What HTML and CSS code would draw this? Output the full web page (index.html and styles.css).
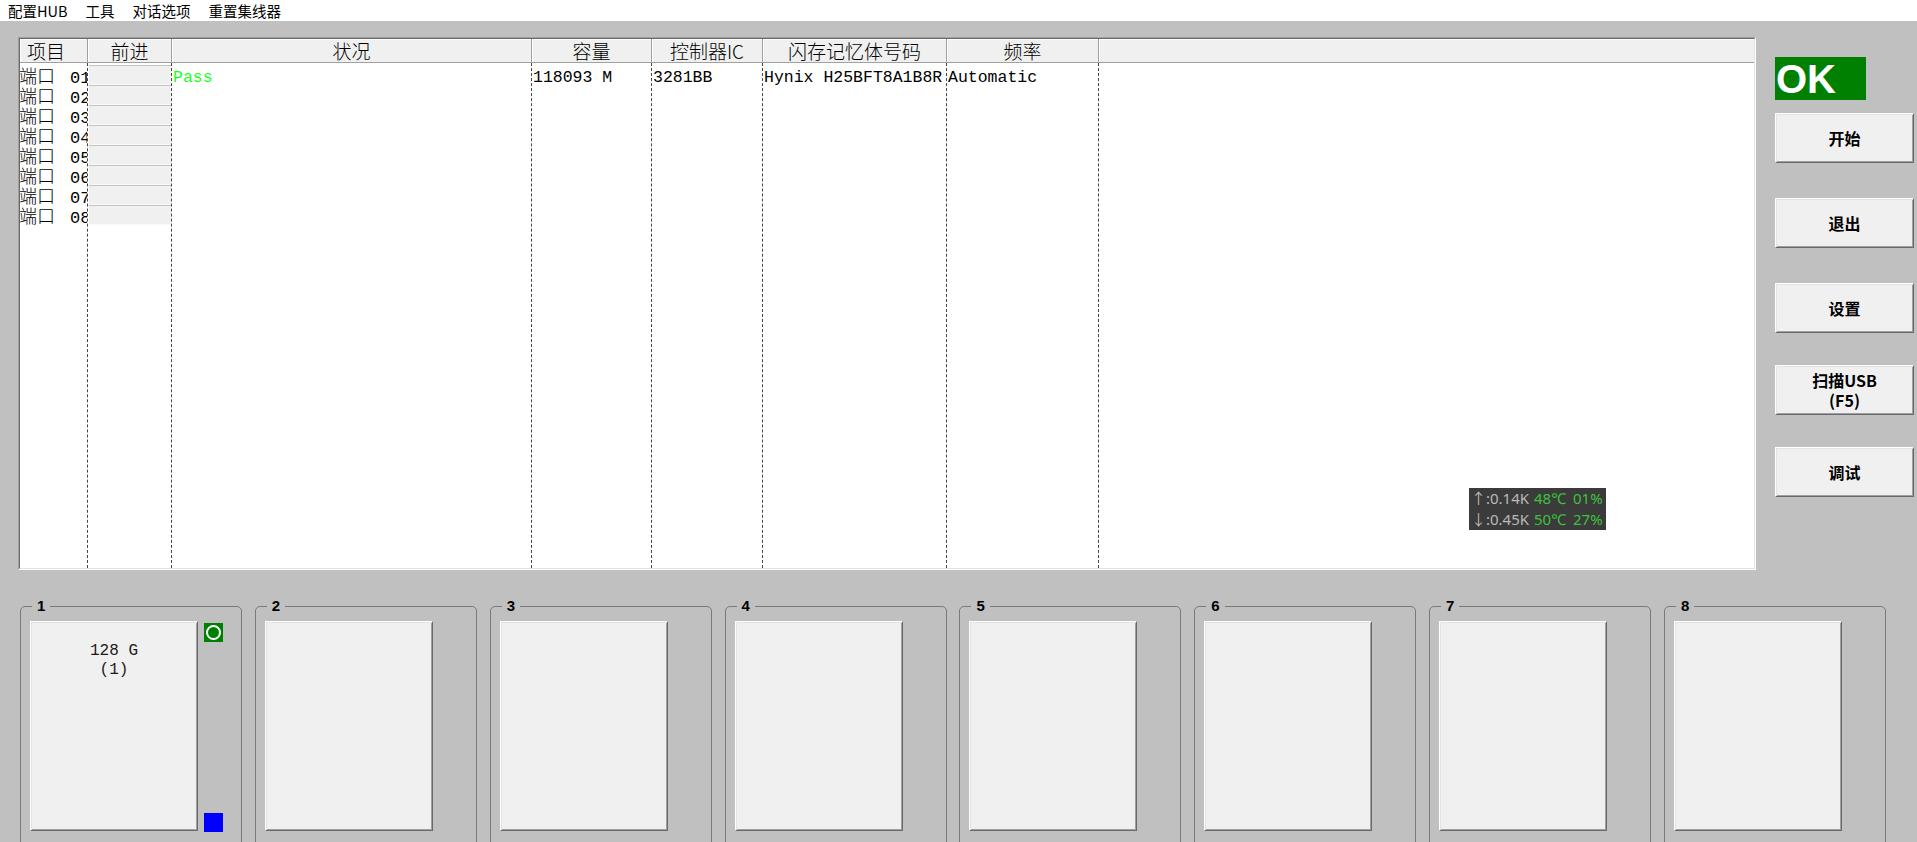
FILE: index.html
```html
<!DOCTYPE html>
<html lang="zh-CN">
<head>
<meta charset="utf-8">
<title>USB HUB</title>
<link rel="stylesheet" href="styles.css">
</head>
<body>
<nav class="menubar">
  <span>配置HUB</span><span>工具</span><span>对话选项</span><span>重置集线器</span>
</nav>
<div class="main">
  <div class="grid">
    <div class="grid-in">
      <div class="hd hd-left">项目</div>
      <div class="hd">前进</div>
      <div class="hd">状况</div>
      <div class="hd">容量</div>
      <div class="hd">控制器IC</div>
      <div class="hd">闪存记忆体号码</div>
      <div class="hd">频率</div>
      <div class="hd hd-last"></div>

      <div class="col col-port">
        <div class="port">端口<span class="num">01</span></div>
        <div class="port">端口<span class="num">02</span></div>
        <div class="port">端口<span class="num">03</span></div>
        <div class="port">端口<span class="num">04</span></div>
        <div class="port">端口<span class="num">05</span></div>
        <div class="port">端口<span class="num">06</span></div>
        <div class="port">端口<span class="num">07</span></div>
        <div class="port">端口<span class="num">08</span></div>
      </div>
      <div class="col col-prog">
        <div class="prog"></div><div class="prog"></div><div class="prog"></div><div class="prog"></div>
        <div class="prog"></div><div class="prog"></div><div class="prog"></div><div class="prog"></div>
      </div>
      <div class="col"><div class="cell pass">Pass</div></div>
      <div class="col"><div class="cell">118093 M</div></div>
      <div class="col"><div class="cell">3281BB</div></div>
      <div class="col"><div class="cell">Hynix H25BFT8A1B8R</div></div>
      <div class="col"><div class="cell">Automatic</div></div>
      <div class="col col-last"></div>
    </div>
    <div class="meter">
      <div><span class="mg">↑:0.14K</span> <span class="mv">48℃ 01%</span></div>
      <div><span class="mg">↓:0.45K</span> <span class="mv">50℃ 27%</span></div>
    </div>
  </div>
  <aside class="side">
    <div class="ok">OK</div>
    <button class="btn b1">开始</button>
    <button class="btn b2">退出</button>
    <button class="btn b3">设置</button>
    <button class="btn b4">扫描USB<br>(F5)</button>
    <button class="btn b5">调试</button>
  </aside>
</div>
<div class="slots">
  <fieldset class="slot"><legend>1</legend>
    <div class="slot-body">
      <div class="drive">128 G<br>(1)</div>
      <div class="leds">
        <span class="led led-ok"><svg width="19" height="19" viewBox="0 0 19 19"><circle cx="9.5" cy="9.5" r="6.5" fill="#008000" stroke="#fff" stroke-width="2"/></svg></span>
        <span class="led led-blue"></span>
      </div>
    </div>
  </fieldset>
  <fieldset class="slot"><legend>2</legend><div class="slot-body"><div class="drive"></div></div></fieldset>
  <fieldset class="slot"><legend>3</legend><div class="slot-body"><div class="drive"></div></div></fieldset>
  <fieldset class="slot"><legend>4</legend><div class="slot-body"><div class="drive"></div></div></fieldset>
  <fieldset class="slot"><legend>5</legend><div class="slot-body"><div class="drive"></div></div></fieldset>
  <fieldset class="slot"><legend>6</legend><div class="slot-body"><div class="drive"></div></div></fieldset>
  <fieldset class="slot"><legend>7</legend><div class="slot-body"><div class="drive"></div></div></fieldset>
  <fieldset class="slot"><legend>8</legend><div class="slot-body"><div class="drive"></div></div></fieldset>
</div>
</body>
</html>
```
FILE: styles.css
```css
html, body {
  margin: 0;
  height: 100%;
  overflow: hidden;
}
body {
  background: #c0c0c0;
  font-family: "Noto Sans CJK SC", "Noto Sans", sans-serif;
  color: #000;
}

/* menu */
.menubar {
  height: 21px;
  background: #fff;
  display: flex;
  align-items: center;
  padding-left: 8px;
  font-size: 14.5px;
  line-height: 21px;
}
.menubar span {
  margin-right: 18px;
}

/* main area */
.main {
  display: flex;
  padding: 16px 0 0 18px;
}
.grid {
  position: relative;
  width: 1738px;
  height: 533px;
  box-sizing: border-box;
  border: 1px solid;
  border-color: #a0a0a0 #fff #fff #a0a0a0;
}
.grid-in {
  height: 100%;
  box-sizing: border-box;
  border: 1px solid;
  border-color: #696969 #e3e3e3 #e3e3e3 #696969;
  background: #fff;
  display: grid;
  grid-template-columns: 68px 84px 360px 120px 111px 184px 152px 1fr;
  grid-template-rows: 24px 1fr;
}
.hd {
  background: #f0f0f0;
  box-sizing: border-box;
  border-right: 1px solid #a0a0a0;
  border-bottom: 1px solid #a0a0a0;
  box-shadow: inset 1px 1px #fff;
  font-size: 19px;
  line-height: 23px;
  text-align: center;
  font-weight: 300;
  white-space: nowrap;
}
.hd-left {
  text-align: left;
  padding-left: 7px;
}
.hd-last {
  border-right: none;
}
.col {
  border-right: 1px dashed #444;
  padding-top: 2px;
  overflow: hidden;
  white-space: nowrap;
  font-family: "Liberation Mono", "Noto Sans CJK SC", monospace;
  font-size: 16.5px;
  line-height: 20px;
}
.col-last {
  border-right: none;
}
.port {
  font-family: "Noto Sans CJK SC", sans-serif;
  font-size: 18px;
  line-height: 20px;
  font-weight: 300;
  height: 20px;
  margin-left: -1px;
}
.port .num {
  font-family: "Liberation Mono", monospace;
  font-size: 17px;
  margin-left: 15px;
}
.prog {
  height: 18px;
  margin-left: 1px;
  background: #f0f0f0;
  border-top: 1px solid #c4c4c4;
  border-bottom: 1px solid #fafafa;
}
.cell {
  padding: 3px 0 0 1px;
  height: 20px;
}
.pass {
  color: #1cff1c;
}

/* temperature overlay */
.meter {
  position: absolute;
  left: 1450px;
  top: 450px;
  width: 137px;
  height: 42px;
  box-sizing: border-box;
  padding: 0 0 0 2px;
  background: #3b3b3b;
  font-family: "Noto Sans", "Noto Sans CJK SC", sans-serif;
  font-size: 15px;
  line-height: 21px;
  white-space: nowrap;
  overflow: hidden;
}
.mg {
  color: #b9b9b9;
}
.mv {
  color: #3cc23c;
  word-spacing: 3px;
  margin-left: 1px;
}

/* side buttons */
.side {
  margin-left: 19px;
  width: 139px;
  display: flex;
  flex-direction: column;
  padding-top: 20px;
}
.ok {
  width: 91px;
  height: 43px;
  background: #008000;
  color: #fff;
  font-family: "Liberation Sans", sans-serif;
  font-weight: bold;
  font-size: 40px;
  line-height: 45px;
  padding-left: 1px;
  box-sizing: border-box;
  overflow: hidden;
}
.btn {
  height: 50px;
  width: 139px;
  box-sizing: border-box;
  background: #f0f0f0;
  border: 1px solid;
  border-color: #fff #696969 #696969 #fff;
  box-shadow: inset 1px 1px #e3e3e3, inset -1px -1px #a0a0a0;
  font-family: "Noto Sans CJK SC", sans-serif;
  font-weight: bold;
  font-size: 16px;
  line-height: 20px;
  color: #000;
  padding: 0;
}
.b1 { margin-top: 13px; }
.b2 { margin-top: 35px; }
.b3 { margin-top: 35px; }
.b4 { margin-top: 32px; }
.b5 { margin-top: 32px; }

/* slots */
.slots {
  display: grid;
  grid-template-columns: repeat(8, 222px);
  column-gap: 12.85px;
  padding-left: 20px;
  margin-top: 28px;
}
.slot {
  margin: 0;
  padding: 0;
  min-width: 0;
  height: 270px;
  border: 1px solid #7a7a7a;
  border-radius: 5px;
}
.slot legend {
  margin-left: 11px;
  padding: 0 5px;
  font-family: "Liberation Sans", sans-serif;
  font-weight: bold;
  font-size: 15px;
  line-height: 16px;
}
.slot-body {
  display: flex;
  padding: 7px 0 0 9px;
  gap: 6px;
}
.drive {
  width: 168px;
  height: 210px;
  box-sizing: border-box;
  background: #f0f0f0;
  border: 1px solid;
  border-color: #fff #696969 #696969 #fff;
  box-shadow: inset 1px 1px #e3e3e3, inset -1px -1px #a0a0a0;
  text-align: center;
  padding-top: 20px;
  font-family: "Liberation Mono", monospace;
  font-size: 16px;
  line-height: 19px;
  color: #1a1a1a;
}
.leds {
  width: 19px;
  height: 211px;
  box-sizing: border-box;
  padding-top: 2px;
  display: flex;
  flex-direction: column;
  justify-content: space-between;
}
.led {
  display: block;
  width: 19px;
  height: 19px;
}
.led svg {
  display: block;
}
.led-ok {
  background: #008000;
}
.led-blue {
  background: #0000ff;
}
```
